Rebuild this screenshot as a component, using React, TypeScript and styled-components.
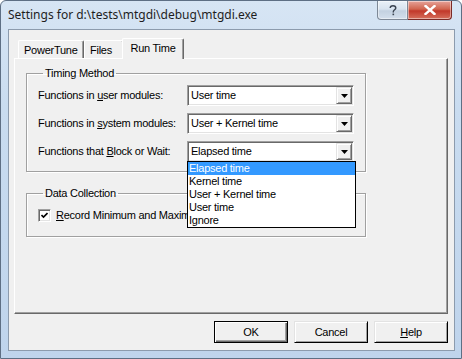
import React from 'react'
import styled, { createGlobalStyle } from 'styled-components'

const GlobalStyle = createGlobalStyle`
  html, body {
    margin: 0;
    padding: 0;
    background: #ffffff;
  }
  body {
    font-family: 'Liberation Sans', Arial, sans-serif;
    font-size: 11px;
    letter-spacing: -0.25px;
  }
`

const Frame = styled.div`
  box-sizing: border-box;
  width: 462px;
  height: 359px;
  border: 1px solid #5e6f84;
  border-radius: 6px 6px 0 0;
  background: linear-gradient(180deg, #d7e5f4 0%, #c9dcf0 30%, #bfd4ec 100%);
  display: flex;
  flex-direction: column;
  padding: 0 6px 7px 7px;
`

const TitleBar = styled.div`
  height: 28px;
  display: flex;
  align-items: flex-start;
  justify-content: space-between;
`

const Title = styled.div`
  font-family: 'Noto Sans', 'Open Sans', sans-serif;
  font-size: 12px;
  color: #1e1e1e;
  line-height: 28px;
  letter-spacing: 0;
`

const CaptionButtons = styled.div`
  display: flex;
  margin-right: 3px;
`

const CaptionButton = styled.div<{ $close?: boolean }>`
  box-sizing: border-box;
  height: 19px;
  width: ${({ $close }) => ($close ? '44px' : '31px')};
  display: flex;
  align-items: center;
  justify-content: center;
  border: 1px solid ${({ $close }) => ($close ? '#7b2a26' : '#7d8896')};
  border-top: none;
  border-left: ${({ $close }) => ($close ? 'none' : undefined)};
  border-radius: ${({ $close }) => ($close ? '0 0 4px 0' : '0 0 0 4px')};
  background: ${({ $close }) =>
    $close
      ? 'linear-gradient(180deg, #e6a39a 0%, #d1654f 45%, #c2382a 55%, #d66f5c 100%)'
      : 'linear-gradient(180deg, #eaf1f8 0%, #d8e3ef 45%, #c3d1e0 55%, #d3dfec 100%)'};
  box-shadow: inset 0 0 0 1px rgba(255, 255, 255, 0.45);
`

const Client = styled.div`
  flex: 1;
  display: flex;
  flex-direction: column;
  background: #f0f0f0;
  border: 1px solid #8c9bad;
  padding: 8px 6px 6px 5px;
`

const TabStrip = styled.div`
  display: flex;
  align-items: flex-end;
  padding-left: 4px;
  height: 20px;
  position: relative;
  z-index: 1;
`

const Tab = styled.div<{ $active?: boolean; $w: number }>`
  box-sizing: border-box;
  width: ${({ $w, $active }) => ($active ? $w + 4 : $w)}px;
  height: ${({ $active }) => ($active ? '21px' : '18px')};
  margin: ${({ $active }) => ($active ? '0 -2px -1px' : '0')};
  padding: ${({ $active }) => ($active ? '2px 0 0 0' : '2px 0 0 5px')};
  text-align: ${({ $active }) => ($active ? 'center' : 'left')};
  background: #f0f0f0;
  border-top: 1px solid #ffffff;
  border-left: 1px solid #ffffff;
  border-right: 1px solid #696969;
  box-shadow: inset -1px 0 0 #a0a0a0;
  border-radius: 2px 2px 0 0;
  color: #000;
  line-height: 14px;
`

const TabPanel = styled.div`
  box-sizing: border-box;
  height: 256px;
  border-top: 1px solid #ffffff;
  border-left: 1px solid #ffffff;
  border-right: 1px solid #696969;
  border-bottom: 1px solid #696969;
  box-shadow: inset -1px -1px 0 #a0a0a0;
  padding: 8px 0 0 11px;
  display: flex;
  flex-direction: column;
`

const Group = styled.fieldset<{ $top?: number }>`
  box-sizing: border-box;
  width: 340px;
  margin: ${({ $top }) => $top ?? 0}px 0 0 0;
  border: 1px solid #a0a0a0;
  box-shadow: inset 1px 1px 0 #ffffff, 1px 1px 0 #ffffff;
  padding: 5px 11px 9px 11px;
  min-width: 0;
`

const Legend = styled.legend`
  padding: 0 2px;
  margin-left: 5px;
  line-height: 13px;
  color: #000;
`

const FieldGrid = styled.div`
  display: grid;
  grid-template-columns: 149px 167px;
  row-gap: 7px;
  align-items: center;
`

const Label = styled.div`
  color: #000;
  line-height: 13px;
`

const Combo = styled.div`
  position: relative;
  box-sizing: border-box;
  height: 21px;
  background: #ffffff;
  border-top: 1px solid #a0a0a0;
  border-left: 1px solid #a0a0a0;
  border-right: 1px solid #ffffff;
  border-bottom: 1px solid #ffffff;
  box-shadow: inset 1px 1px 0 #696969, inset -1px -1px 0 #e3e3e3;
  display: flex;
  align-items: center;
  padding: 1px 1px 1px 3px;
`

const ComboText = styled.div`
  flex: 1;
  line-height: 13px;
  color: #000;
`

const ArrowButton = styled.div`
  box-sizing: border-box;
  width: 16px;
  height: 17px;
  background: #f0f0f0;
  border-top: 1px solid #e3e3e3;
  border-left: 1px solid #e3e3e3;
  border-right: 1px solid #696969;
  border-bottom: 1px solid #696969;
  box-shadow: inset 1px 1px 0 #ffffff, inset -1px -1px 0 #a0a0a0;
  display: flex;
  align-items: center;
  justify-content: center;
`

const DropList = styled.div`
  position: absolute;
  top: 100%;
  left: -1px;
  width: 169px;
  box-sizing: border-box;
  background: #ffffff;
  border: 1px solid #000000;
  z-index: 5;
`

const DropItem = styled.div<{ $selected?: boolean }>`
  height: 13px;
  line-height: 13px;
  padding-left: 1px;
  background: ${({ $selected }) => ($selected ? '#3399ff' : 'transparent')};
  color: ${({ $selected }) => ($selected ? '#ffffff' : '#000000')};
  white-space: nowrap;
`

const CheckRow = styled.div`
  display: flex;
  align-items: center;
  gap: 5px;
  padding-top: 4px;
  padding-bottom: 5px;
`

const CheckBox = styled.div`
  box-sizing: border-box;
  width: 13px;
  height: 13px;
  background: #ffffff;
  border-top: 1px solid #a0a0a0;
  border-left: 1px solid #a0a0a0;
  border-right: 1px solid #ffffff;
  border-bottom: 1px solid #ffffff;
  box-shadow: inset 1px 1px 0 #696969, inset -1px -1px 0 #e3e3e3;
  display: flex;
  align-items: center;
  justify-content: center;
`

const CheckText = styled.div`
  line-height: 13px;
  white-space: nowrap;
`

const ButtonRow = styled.div`
  display: flex;
  justify-content: flex-end;
  gap: 6px;
  margin-top: 7px;
`

const PushButton = styled.div<{ $default?: boolean }>`
  box-sizing: border-box;
  width: 74px;
  height: 22px;
  background: #f0f0f0;
  display: flex;
  align-items: center;
  justify-content: center;
  color: #000;
  border: 1px solid ${({ $default }) => ($default ? '#000000' : '#e3e3e3')};
  border-right-color: #000000;
  border-bottom-color: #000000;
  box-shadow: ${({ $default }) =>
    $default
      ? 'inset 1px 1px 0 #ffffff, inset -1px -1px 0 #696969, inset -2px -2px 0 #a0a0a0'
      : 'inset 1px 1px 0 #ffffff, inset -1px -1px 0 #a0a0a0'};
`

const U = styled.span`
  text-decoration: underline;
  text-underline-offset: 1px;
`

const Arrow = () => (
  <svg width="7" height="4" viewBox="0 0 7 4">
    <path d="M0 0 H7 L3.5 4 Z" fill="#000" />
  </svg>
)

const App: React.FC = () => {
  return (
    <>
      <GlobalStyle />
      <Frame>
        <TitleBar>
          <Title>Settings for d:\tests\mtgdi\debug\mtgdi.exe</Title>
          <CaptionButtons>
            <CaptionButton>
              <svg width="8" height="11" viewBox="0 0 8 11">
                <path
                  d="M1.2 3 C1.2 1.2 2.6 0.8 4 0.8 C5.6 0.8 6.8 1.6 6.8 3 C6.8 4.6 4.3 5 4.3 6.8 V7.4"
                  fill="none"
                  stroke="#3b4451"
                  strokeWidth="1.4"
                />
                <rect x="3.5" y="8.6" width="1.6" height="1.6" fill="#3b4451" />
              </svg>
            </CaptionButton>
            <CaptionButton $close>
              <svg width="12" height="10" viewBox="0 0 12 10">
                <path d="M1.5 1 L10.5 9 M10.5 1 L1.5 9" stroke="#ffffff" strokeWidth="2.4" strokeLinecap="square" />
              </svg>
            </CaptionButton>
          </CaptionButtons>
        </TitleBar>
        <Client>
          <TabStrip>
            <Tab $w={66}>PowerTune</Tab>
            <Tab $w={40}>Files</Tab>
            <Tab $w={58} $active>
              Run Time
            </Tab>
          </TabStrip>
          <TabPanel>
            <Group>
              <Legend>Timing Method</Legend>
              <FieldGrid>
                <Label>
                  Functions in <U>u</U>ser modules:
                </Label>
                <Combo>
                  <ComboText>User time</ComboText>
                  <ArrowButton>
                    <Arrow />
                  </ArrowButton>
                </Combo>
                <Label>
                  Functions in <U>s</U>ystem modules:
                </Label>
                <Combo>
                  <ComboText>User + Kernel time</ComboText>
                  <ArrowButton>
                    <Arrow />
                  </ArrowButton>
                </Combo>
                <Label>
                  Functions that <U>B</U>lock or Wait:
                </Label>
                <Combo>
                  <ComboText>Elapsed time</ComboText>
                  <ArrowButton>
                    <Arrow />
                  </ArrowButton>
                  <DropList>
                    <DropItem $selected>Elapsed time</DropItem>
                    <DropItem>Kernel time</DropItem>
                    <DropItem>User + Kernel time</DropItem>
                    <DropItem>User time</DropItem>
                    <DropItem>Ignore</DropItem>
                  </DropList>
                </Combo>
              </FieldGrid>
            </Group>
            <Group $top={15}>
              <Legend>Data Collection</Legend>
              <CheckRow>
                <CheckBox>
                  <svg width="7" height="7" viewBox="0 0 7 7">
                    <path d="M0.5 3 L2.5 5 L6.5 1" fill="none" stroke="#000" strokeWidth="1.6" />
                  </svg>
                </CheckBox>
                <CheckText>
                  <U>R</U>ecord Minimum and Maximum Times
                </CheckText>
              </CheckRow>
            </Group>
          </TabPanel>
          <ButtonRow>
            <PushButton $default>OK</PushButton>
            <PushButton>Cancel</PushButton>
            <PushButton>
              <span>
                <U>H</U>elp
              </span>
            </PushButton>
          </ButtonRow>
        </Client>
      </Frame>
    </>
  )
}

export default App
